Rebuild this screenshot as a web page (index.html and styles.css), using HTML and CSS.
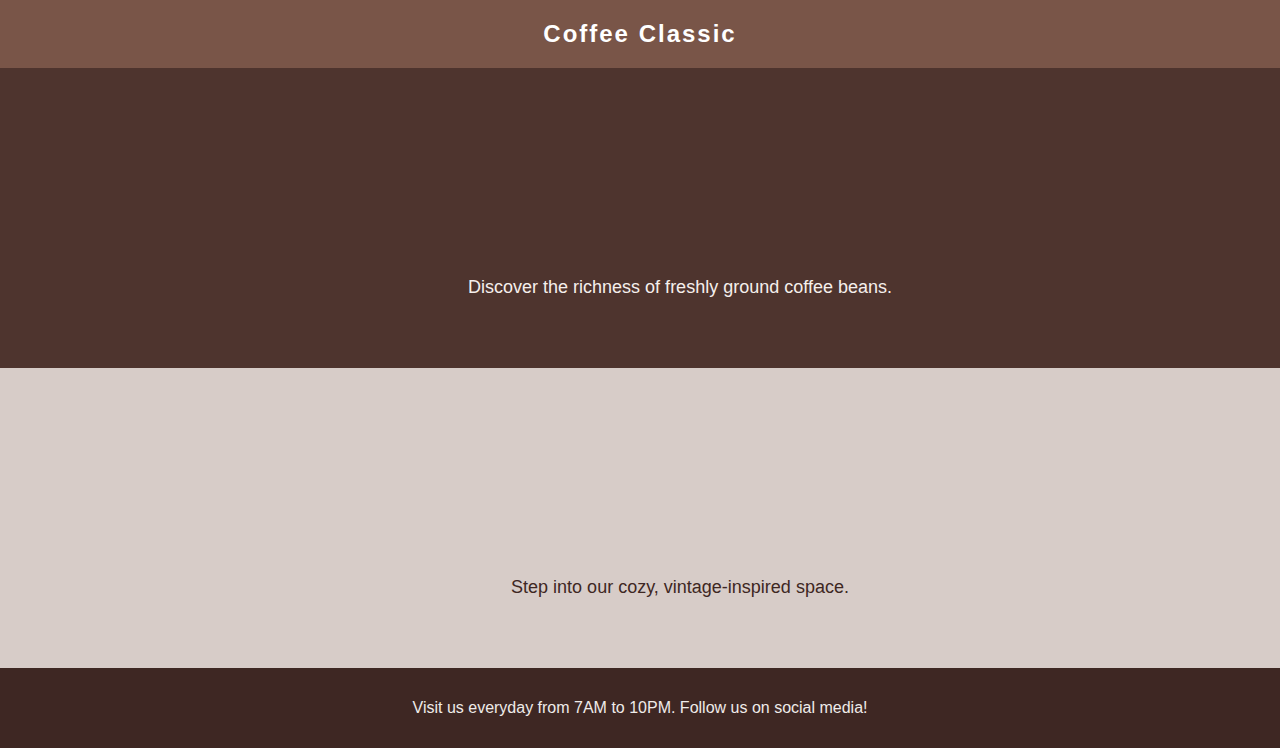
FILE: index.html
```html
<!DOCTYPE html>
<html lang="en">
<head>
<meta charset="utf-8">
<title>Coffee Classic</title>
<link rel="stylesheet" href="styles.css">
</head>
<body>
<header class="site-header">
  <h1 class="site-title">Coffee Classic</h1>
</header>
<main>
  <section class="feature feature-dark">
    <p class="feature-text">Discover the richness of freshly ground coffee beans.</p>
  </section>
  <section class="feature feature-light">
    <p class="feature-text">Step into our cozy, vintage-inspired space.</p>
  </section>
</main>
<footer class="site-footer">
  <p class="footer-text">Visit us everyday from 7AM to 10PM. Follow us on social media!</p>
</footer>
</body>
</html>
```
FILE: styles.css
```css
* { box-sizing: border-box; }
html, body { margin: 0; padding: 0; }
body {
  font-family: "Liberation Sans", Arial, sans-serif;
  background: #D7CCC8;
}
.site-header {
  background: #795548;
  height: 68px;
  display: flex;
  align-items: center;
  justify-content: center;
}
.site-title {
  margin: 0;
  color: #ffffff;
  font-size: 24px;
  font-weight: bold;
  letter-spacing: 2px;
  line-height: 28px;
}
.feature {
  height: 300px;
  display: flex;
  flex-direction: column;
  justify-content: flex-end;
  align-items: center;
  padding: 0 0 70px 80px;
}
.feature-dark { background: #4E342E; color: #F5EFEC; }
.feature-light { background: #D7CCC8; color: #3E2723; }
.feature-text {
  margin: 0;
  font-size: 18px;
  line-height: 21px;
}
.site-footer {
  background: #3E2723;
  height: 80px;
  display: flex;
  align-items: center;
  justify-content: center;
}
.footer-text {
  margin: 0;
  color: #EFEBE9;
  font-size: 16px;
  line-height: 20px;
}
```
